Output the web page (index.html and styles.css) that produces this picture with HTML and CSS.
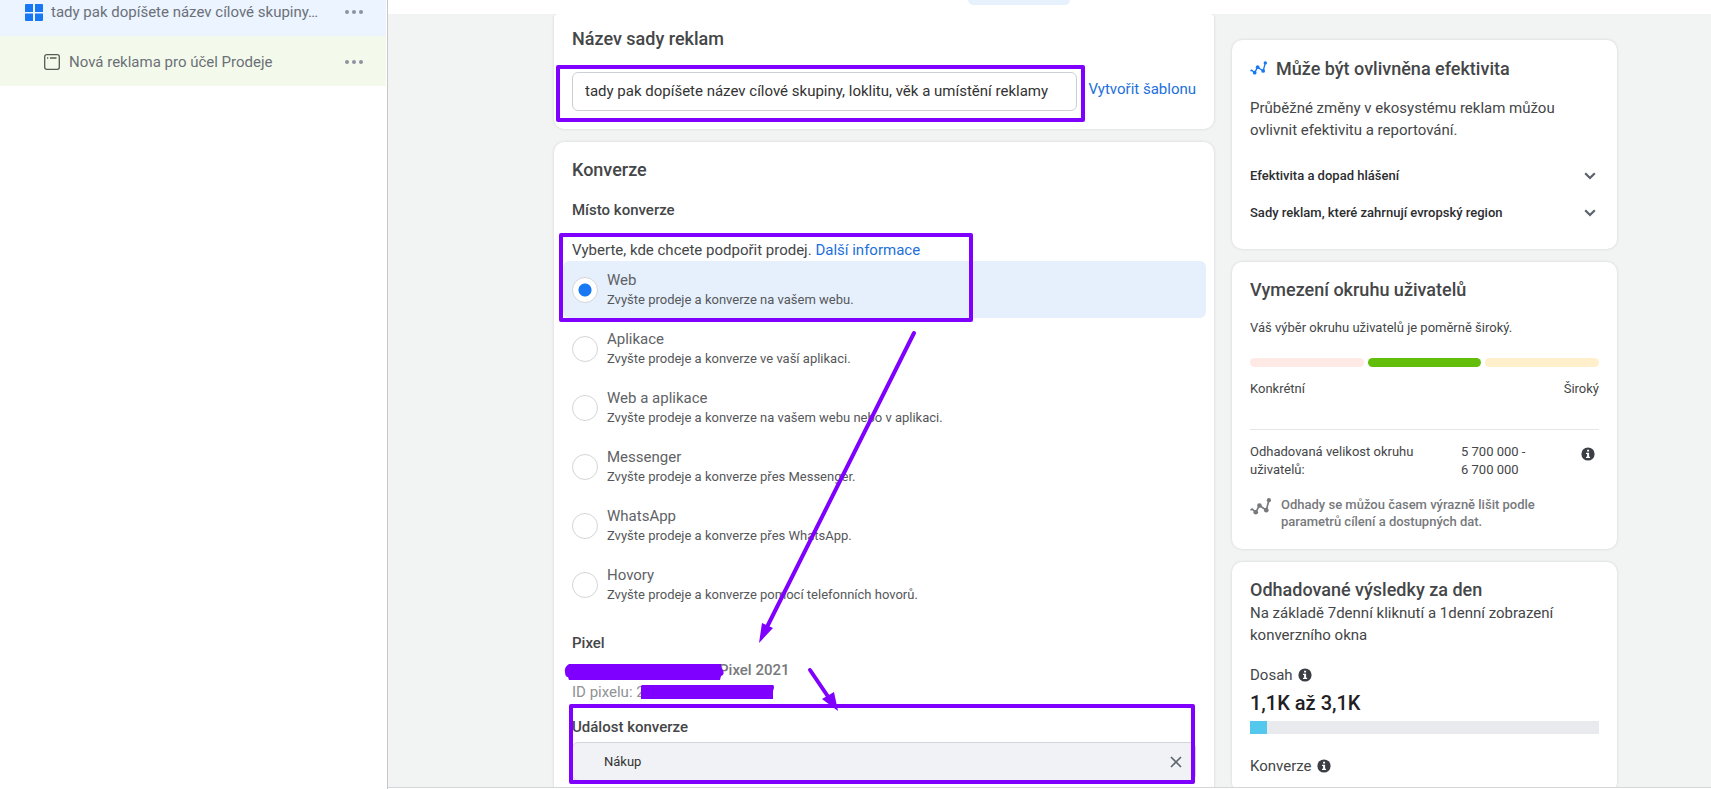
FILE: index.html
```html
<!DOCTYPE html>
<html lang="cs">
<head>
    <meta charset="UTF-8">
    <meta name="viewport" content="width=device-width, initial-scale=1.0">
    <title>Správce reklam - sada reklam</title>
    <link rel="stylesheet" href="styles.css">
</head>
<body>
    <svg class="sprite" aria-hidden="true">
        <symbol id="icon-trend" viewBox="0 0 20 16">
            <path d="M0.5 11.5 L2 10.5 L5.5 13.5 L9 7 L15.5 11.5 L18 2" fill="none" stroke="currentColor" stroke-width="1.6"/>
            <circle cx="5.5" cy="13.5" r="2.2" fill="currentColor"/>
            <circle cx="9" cy="7" r="2.2" fill="currentColor"/>
            <circle cx="15.5" cy="11.5" r="2.2" fill="currentColor"/>
            <circle cx="18" cy="2" r="2" fill="currentColor"/>
        </symbol>
        <symbol id="icon-info" viewBox="0 0 14 14">
            <circle cx="7" cy="7" r="6.6" fill="currentColor"/>
            <path d="M6.1 2.8h2v1.8h-2zM5 5.7h3.1v4.1h1v1.2H5V9.8h1.1V6.9H5z" fill="#fff"/>
        </symbol>
        <symbol id="icon-chevron" viewBox="0 0 12 8">
            <path d="M1.2 1.2 L6 6 L10.8 1.2" fill="none" stroke="currentColor" stroke-width="2.2"/>
        </symbol>
        <symbol id="icon-dots" viewBox="0 0 18 4">
            <circle cx="2" cy="2" r="2" fill="currentColor"/>
            <circle cx="9" cy="2" r="2" fill="currentColor"/>
            <circle cx="16" cy="2" r="2" fill="currentColor"/>
        </symbol>
    </svg>

    <nav class="sidebar">
        <div class="tree-item tree-set">
            <svg class="set-icon" viewBox="0 0 18 17"><path d="M1 0h7v8H0V1a1 1 0 0 1 1-1zM10 0h7a1 1 0 0 1 1 1v7h-8zM0 9.500h8V17H1a1 1 0 0 1-1-1zM10 9.500h8V16a1 1 0 0 1-1 1h-7z" fill="#1877f2"/></svg>
            <a href="#">tady pak dopíšete název cílové skupiny…</a>
            <button type="button" aria-label="Další možnosti"><svg class="dots"><use href="#icon-dots"/></svg></button>
        </div>
        <div class="tree-item tree-ad">
            <svg class="ad-icon" viewBox="0 0 16 16"><rect x="0.700" y="0.700" width="14.600" height="14.600" rx="2" fill="none" stroke="#555b56" stroke-width="1.300"/><path d="M3 4h1.300M6 4h6.500" stroke="#555b56" stroke-width="1.300"/></svg>
            <a href="#">Nová reklama pro účel Prodeje</a>
            <button type="button" aria-label="Další možnosti"><svg class="dots"><use href="#icon-dots"/></svg></button>
        </div>
    </nav>

    <div class="workspace">
        <header class="topbar"><span class="tab"></span></header>

        <div class="columns">
            <main class="form-column">
                <section class="card name-card">
                    <h2><label for="setName">Název sady reklam</label></h2>
                    <div class="name-row">
                        <input type="text" id="setName" value="tady pak dopíšete název cílové skupiny, loklitu, věk a umístění reklamy">
                        <a href="#">Vytvořit šablonu</a>
                    </div>
                </section>

                <section class="card conversion-card">
                    <h2>Konverze</h2>
                    <h3>Místo konverze</h3>
                    <p class="hint">Vyberte, kde chcete podpořit prodej. <a href="#">Další informace</a></p>

                    <div class="options">
                        <label class="option">
                            <input type="radio" name="place" checked>
                            <span>Web<small>Zvyšte prodeje a konverze na vašem webu.</small></span>
                        </label>
                        <label class="option">
                            <input type="radio" name="place">
                            <span>Aplikace<small>Zvyšte prodeje a konverze ve vaší aplikaci.</small></span>
                        </label>
                        <label class="option">
                            <input type="radio" name="place">
                            <span>Web a aplikace<small>Zvyšte prodeje a konverze na vašem webu nebo v aplikaci.</small></span>
                        </label>
                        <label class="option">
                            <input type="radio" name="place">
                            <span>Messenger<small>Zvyšte prodeje a konverze přes Messenger.</small></span>
                        </label>
                        <label class="option">
                            <input type="radio" name="place">
                            <span>WhatsApp<small>Zvyšte prodeje a konverze přes WhatsApp.</small></span>
                        </label>
                        <label class="option">
                            <input type="radio" name="place">
                            <span>Hovory<small>Zvyšte prodeje a konverze pomocí telefonních hovorů.</small></span>
                        </label>
                    </div>

                    <h3>Pixel</h3>
                    <p class="pixel-name">Pixel 2021</p>
                    <p class="pixel-id">ID pixelu: 2</p>

                    <h3 class="event-title"><label for="event">Událost konverze</label></h3>
                    <div class="event-field">
                        <input type="text" id="event" value="Nákup" readonly>
                        <button type="button" aria-label="Vymazat"><svg viewBox="0 0 12 12"><path d="M1 1 L11 11 M11 1 L1 11" stroke="#606770" stroke-width="1.700"/></svg></button>
                    </div>
                </section>
            </main>

            <aside class="info-column">
                <section class="card impact-card">
                    <h2><svg class="trend-blue"><use href="#icon-trend"/></svg>Může být ovlivněna efektivita</h2>
                    <p>Průběžné změny v ekosystému reklam můžou ovlivnit efektivitu a reportování.</p>
                    <button type="button" class="expander">Efektivita a dopad hlášení<svg><use href="#icon-chevron"/></svg></button>
                    <button type="button" class="expander">Sady reklam, které zahrnují evropský region<svg><use href="#icon-chevron"/></svg></button>
                </section>

                <section class="card audience-card">
                    <h2>Vymezení okruhu uživatelů</h2>
                    <p class="audience-text">Váš výběr okruhu uživatelů je poměrně široký.</p>
                    <div class="gauge"><span class="narrow"></span><span class="good"></span><span class="broad"></span></div>
                    <div class="gauge-labels"><span>Konkrétní</span><span>Široký</span></div>
                    <div class="estimate">
                        <span>Odhadovaná velikost okruhu uživatelů:</span>
                        <span>5 700 000 -<br>6 700 000</span>
                        <svg class="info"><use href="#icon-info"/></svg>
                    </div>
                    <div class="note">
                        <svg><use href="#icon-trend"/></svg>
                        <p>Odhady se můžou časem výrazně lišit podle parametrů cílení a dostupných dat.</p>
                    </div>
                </section>

                <section class="card results-card">
                    <h2>Odhadované výsledky za den</h2>
                    <p>Na základě 7denní kliknutí a 1denní zobrazení konverzního okna</p>
                    <div class="metric">Dosah <svg class="info"><use href="#icon-info"/></svg></div>
                    <strong>1,1K až 3,1K</strong>
                    <div class="bar"><span style="width: 5%"></span></div>
                    <div class="metric">Konverze <svg class="info"><use href="#icon-info"/></svg></div>
                </section>
            </aside>
        </div>
        <footer class="bottombar"></footer>
    </div>

    <!-- poznámky nakreslené přes formulář -->
    <svg class="marks" aria-hidden="true">
        <g fill="none" stroke="#8000ff" stroke-width="4" stroke-linejoin="round" stroke-linecap="round">
            <rect x="558" y="67" width="525" height="53"/>
            <rect x="561" y="235" width="410" height="85"/>
            <rect x="571" y="706" width="622" height="76"/>
            <path d="M914 333 L768 625"/>
            <path d="M810 670 L829 698"/>
        </g>
        <g fill="#8000ff">
            <path d="M759 643 L762 623 L773 628z"/>
            <path d="M838 711 L822 699 L834 692z"/>
            <path d="M569 664 q-5 3 -4 8 q0 5 3 5 l1 3 h151 l1 -4 q4 -1 2 -6 l-2 -3 v-3 h-151z"/>
            <path d="M642 685 h131 q2 1 0 6 v8 h-132 v-13z"/>
        </g>
    </svg>
</body>
</html>
```
FILE: styles.css
```css
* {
    box-sizing: border-box;
}
body {
    margin: 0;
    display: flex;
    height: 100vh;
    overflow: hidden;
    position: relative;
    background-color: #fff;
    color: #444648;
    font-family: Roboto, "Liberation Sans", sans-serif;
    font-size: 15px;
    line-height: 20px;
}
h2, h3, p {
    margin: 0;
}
h2 {
    font-size: 18px;
    line-height: 24px;
    font-weight: 500;
}
h3 {
    font-size: 15px;
    line-height: 20px;
    font-weight: 500;
}
a {
    color: #216fdb;
    text-decoration: none;
}
button {
    border: none;
    background: none;
    padding: 0;
    font-family: inherit;
    cursor: pointer;
}
.sprite {
    display: none;
}

/* levý strom */
.sidebar {
    flex: 0 0 388px;
    border-right: 1px solid #c6c8ca;
    padding-right: 1px;
}
.tree-item {
    display: flex;
    align-items: center;
    height: 50px;
    padding-right: 23px;
}
.tree-item a {
    flex: 1;
    color: #6b7078;
    white-space: nowrap;
}
.tree-item button {
    height: 20px;
    color: #8d92a0;
}
.tree-set {
    height: 36px;
    padding-left: 25px;
    padding-bottom: 12px;
    background-color: #ecf4ff;
}
.tree-ad {
    padding-left: 44px;
    padding-top: 2px;
    background-color: #f4faeb;
}
.set-icon {
    width: 18px;
    height: 17px;
    margin-right: 8px;
}
.ad-icon {
    width: 16px;
    height: 16px;
    margin-right: 9px;
}
.dots {
    display: block;
    width: 18px;
    height: 4px;
}

/* pracovní plocha */
.workspace {
    flex: 1;
    display: flex;
    flex-direction: column;
    background-color: #f2f4f4;
}
.topbar {
    flex: 0 0 14px;
    background-color: #fff;
    display: flex;
    justify-content: center;
    padding-right: 62px;
}
.tab {
    width: 102px;
    height: 5px;
    border-radius: 0 0 6px 6px;
    background-color: #e7f0fd;
}
.columns {
    flex: 1;
    min-height: 0;
    overflow: hidden;
    display: grid;
    grid-template-columns: 660fr 385fr;
    gap: 18px;
    padding: 0 94px 0 166px;
}
.bottombar {
    flex: 0 0 2px;
    background-color: #fff;
    border-top: 1px solid #d4d6d9;
}
.card {
    background-color: #fff;
    border-radius: 10px;
    box-shadow: 0 0 3px rgba(0, 0, 0, 0.14);
    padding: 16px 18px;
    margin-bottom: 13px;
}

.name-card {
    padding-top: 13px;
    border-radius: 4px 4px 10px 10px;
}
.name-row {
    display: flex;
    gap: 11px;
    margin-top: 21px;
    padding-bottom: 2px;
}
.name-row input {
    flex: 1;
    min-width: 0;
    height: 39px;
    padding: 0 12px 2px;
    border: 1px solid #ccd0d5;
    border-radius: 6px;
    color: #333;
    font-family: inherit;
    font-size: 15px;
}
.name-row a {
    line-height: 34px;
}
.conversion-card h3 {
    margin-top: 18px;
}
.hint {
    margin-top: 20px;
}
.options {
    display: grid;
    gap: 2px;
    margin: 1px -10px 0 -9px;
}
.option {
    display: flex;
    align-items: center;
    gap: 9px;
    height: 57px;
    padding: 0 9px;
    border-radius: 6px;
    color: #606266;
}
.option:has(input:checked) {
    background-color: #e6f0fd;
}
.option small {
    display: block;
    font-size: 13px;
    line-height: 20px;
    color: #55575a;
}
.option input {
    appearance: none;
    flex: none;
    width: 26px;
    height: 26px;
    margin: 0;
    border: 1px solid #d3d5d8;
    border-radius: 50%;
    background-color: #fff;
}
.option input:checked {
    background-image: radial-gradient(circle, #1877f2 6px, transparent 7px);
}
.conversion-card .options + h3 {
    margin-top: 20px;
}
.pixel-name {
    margin-top: 6px;
    padding-left: 147px;
    line-height: 22px;
    font-weight: 500;
    color: #77797c;
}
.pixel-id {
    line-height: 22px;
    color: #8f9194;
}
.conversion-card .event-title {
    margin: 14px 0 5px;
}
.event-field {
    display: flex;
    align-items: center;
    height: 39px;
    padding: 0 13px 0 31px;
    border: 1px solid #d3d6db;
    border-radius: 6px;
    background-color: #f0f2f5;
}
.event-field input {
    flex: 1;
    border: none;
    padding: 0;
    background: none;
    color: #333;
    font-family: inherit;
    font-size: 13px;
}
.event-field svg {
    display: block;
    width: 12px;
    height: 12px;
}

/* pravý panel */
.info-column p {
    line-height: 22px;
}
.impact-card {
    margin-top: 26px;
    padding-top: 17px;
    padding-bottom: 18px;
}
.trend-blue {
    width: 17px;
    height: 14px;
    margin-right: 9px;
    color: #1877f2;
}
.impact-card p {
    margin: 16px 0;
}
.expander {
    display: flex;
    justify-content: space-between;
    align-items: center;
    width: 100%;
    height: 37px;
    padding-right: 3px;
    color: #2b2d30;
    font-size: 13px;
    font-weight: 500;
    line-height: 18px;
    text-align: left;
}
.expander svg {
    width: 12px;
    height: 8px;
    color: #5b626c;
}
.audience-card {
    font-size: 13px;
    line-height: 18px;
}
.audience-text {
    margin: 15px 0 19px;
}
.gauge {
    display: grid;
    grid-template-columns: 1fr 1fr 1fr;
    gap: 4px;
    height: 9px;
}
.gauge span {
    border-radius: 5px;
}
.gauge .narrow {
    background-color: #ffe9e4;
}
.gauge .good {
    background-color: #62be0b;
}
.gauge .broad {
    background-color: #ffefcb;
}
.gauge-labels {
    display: flex;
    justify-content: space-between;
    margin-top: 13px;
}
.estimate {
    display: grid;
    grid-template-columns: 180px 1fr 14px;
    column-gap: 31px;
    margin-top: 31px;
    padding: 13px 4px 0 0;
    border-top: 1px solid #e4e6e8;
}
.info {
    width: 14px;
    height: 14px;
    color: #3b3f45;
}
.estimate .info {
    margin-top: 4px;
}
.note {
    display: flex;
    gap: 10px;
    margin-top: 17px;
    padding: 0 24px 3px 0;
    color: #77797c;
    font-weight: 500;
}
.note svg {
    flex: none;
    width: 21px;
    height: 17px;
    margin-top: 2px;
}
.info-column .note p {
    line-height: 17px;
}
.metric {
    display: flex;
    align-items: center;
    gap: 5px;
    margin-top: 19px;
}
.results-card strong {
    display: block;
    margin: 6px 0;
    color: #1f2124;
    font-size: 20px;
    line-height: 24px;
    font-weight: 500;
}
.bar {
    height: 13px;
    background-color: #e9eaee;
}
.bar span {
    display: block;
    height: 13px;
    background-color: #54c7ec;
}
.bar + .metric {
    margin-top: 22px;
}

.marks {
    position: absolute;
    top: 0;
    left: 0;
    width: 100%;
    height: 100%;
    pointer-events: none;
}
```
